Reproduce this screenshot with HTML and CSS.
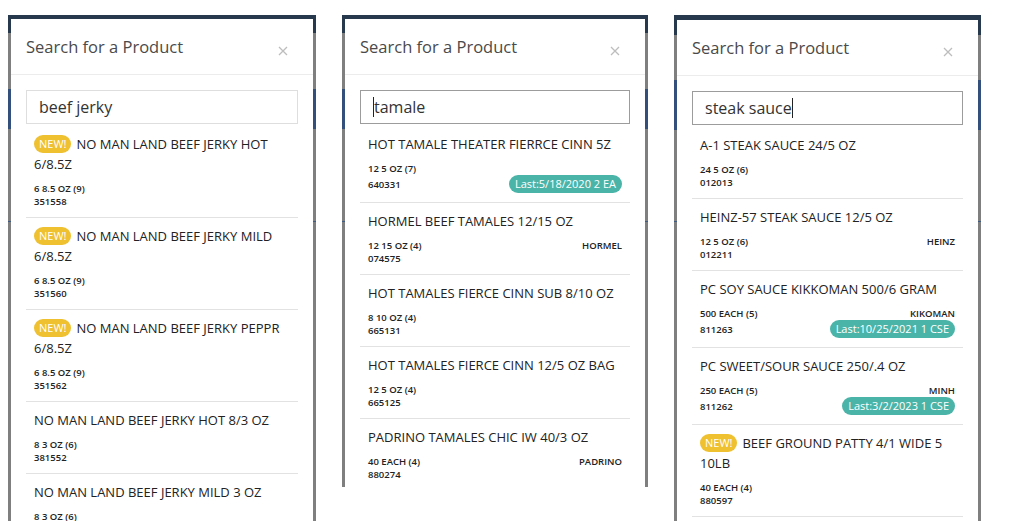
FILE: index.html
```html
<!DOCTYPE html>
<html lang="en">
<head>
<meta charset="utf-8">
<title>Search for a Product</title>
<link rel="stylesheet" href="styles.css">
</head>
<body>
<div class="shots">

  <section class="shot shot--a">
    <div class="modal">
      <header class="modal-head">
        <h2 class="modal-title">Search for a Product</h2>
        <span class="close"><svg width="10" height="10" viewBox="0 0 10 10"><path d="M1 1L9 9M9 1L1 9" stroke="#bdbdbd" stroke-width="1.3" fill="none"/></svg></span>
      </header>
      <div class="modal-body">
        <div class="search">beef jerky</div>
        <ul class="results">
          <li class="item">
            <div class="title"><span class="new">NEW!</span><span class="name">NO MAN LAND BEEF JERKY HOT 6/8.5Z</span></div>
            <div class="meta">
              <div class="row"><span>6 8.5 OZ (9)</span></div>
              <div class="row"><span>351558</span></div>
            </div>
          </li>
          <li class="item">
            <div class="title"><span class="new">NEW!</span><span class="name">NO MAN LAND BEEF JERKY MILD 6/8.5Z</span></div>
            <div class="meta">
              <div class="row"><span>6 8.5 OZ (9)</span></div>
              <div class="row"><span>351560</span></div>
            </div>
          </li>
          <li class="item">
            <div class="title"><span class="new">NEW!</span><span class="name">NO MAN LAND BEEF JERKY PEPPR 6/8.5Z</span></div>
            <div class="meta">
              <div class="row"><span>6 8.5 OZ (9)</span></div>
              <div class="row"><span>351562</span></div>
            </div>
          </li>
          <li class="item">
            <div class="title"><span class="name">NO MAN LAND BEEF JERKY HOT 8/3 OZ</span></div>
            <div class="meta">
              <div class="row"><span>8 3 OZ (6)</span></div>
              <div class="row"><span>381552</span></div>
            </div>
          </li>
          <li class="item">
            <div class="title"><span class="name">NO MAN LAND BEEF JERKY MILD 3 OZ</span></div>
            <div class="meta">
              <div class="row"><span>8 3 OZ (6)</span></div>
            </div>
          </li>
        </ul>
      </div>
    </div>
  </section>

  <section class="shot shot--b">
    <div class="modal">
      <header class="modal-head">
        <h2 class="modal-title">Search for a Product</h2>
        <span class="close"><svg width="10" height="10" viewBox="0 0 10 10"><path d="M1 1L9 9M9 1L1 9" stroke="#bdbdbd" stroke-width="1.3" fill="none"/></svg></span>
      </header>
      <div class="modal-body">
        <div class="search search--focus"><span class="caret"></span>tamale</div>
        <ul class="results">
          <li class="item">
            <div class="title"><span class="name">HOT TAMALE THEATER FIERRCE CINN 5Z</span></div>
            <div class="meta">
              <div class="row"><span>12 5 OZ (7)</span></div>
              <div class="row"><span>640331</span><span class="last">Last:5/18/2020 2 EA</span></div>
            </div>
          </li>
          <li class="item">
            <div class="title"><span class="name">HORMEL BEEF TAMALES 12/15 OZ</span></div>
            <div class="meta">
              <div class="row"><span>12 15 OZ (4)</span><span>HORMEL</span></div>
              <div class="row"><span>074575</span></div>
            </div>
          </li>
          <li class="item">
            <div class="title"><span class="name">HOT TAMALES FIERCE CINN SUB 8/10 OZ</span></div>
            <div class="meta">
              <div class="row"><span>8 10 OZ (4)</span></div>
              <div class="row"><span>665131</span></div>
            </div>
          </li>
          <li class="item">
            <div class="title"><span class="name">HOT TAMALES FIERCE CINN 12/5 OZ BAG</span></div>
            <div class="meta">
              <div class="row"><span>12 5 OZ (4)</span></div>
              <div class="row"><span>665125</span></div>
            </div>
          </li>
          <li class="item">
            <div class="title"><span class="name">PADRINO TAMALES CHIC IW 40/3 OZ</span></div>
            <div class="meta">
              <div class="row"><span>40 EACH (4)</span><span>PADRINO</span></div>
              <div class="row"><span>880274</span></div>
            </div>
          </li>
        </ul>
      </div>
    </div>
  </section>

  <section class="shot shot--c">
    <div class="modal">
      <header class="modal-head">
        <h2 class="modal-title">Search for a Product</h2>
        <span class="close"><svg width="10" height="10" viewBox="0 0 10 10"><path d="M1 1L9 9M9 1L1 9" stroke="#bdbdbd" stroke-width="1.3" fill="none"/></svg></span>
      </header>
      <div class="modal-body">
        <div class="search search--focus">steak sauce<span class="caret"></span></div>
        <ul class="results">
          <li class="item">
            <div class="title"><span class="name">A-1 STEAK SAUCE 24/5 OZ</span></div>
            <div class="meta">
              <div class="row"><span>24 5 OZ (6)</span></div>
              <div class="row"><span>012013</span></div>
            </div>
          </li>
          <li class="item">
            <div class="title"><span class="name">HEINZ-57 STEAK SAUCE 12/5 OZ</span></div>
            <div class="meta">
              <div class="row"><span>12 5 OZ (6)</span><span>HEINZ</span></div>
              <div class="row"><span>012211</span></div>
            </div>
          </li>
          <li class="item">
            <div class="title"><span class="name">PC SOY SAUCE KIKKOMAN 500/6 GRAM</span></div>
            <div class="meta">
              <div class="row"><span>500 EACH (5)</span><span>KIKOMAN</span></div>
              <div class="row"><span>811263</span><span class="last">Last:10/25/2021 1 CSE</span></div>
            </div>
          </li>
          <li class="item">
            <div class="title"><span class="name">PC SWEET/SOUR SAUCE 250/.4 OZ</span></div>
            <div class="meta">
              <div class="row"><span>250 EACH (5)</span><span>MINH</span></div>
              <div class="row"><span>811262</span><span class="last">Last:3/2/2023 1 CSE</span></div>
            </div>
          </li>
          <li class="item">
            <div class="title"><span class="new">NEW!</span><span class="name">BEEF GROUND PATTY 4/1 WIDE 5 10LB</span></div>
            <div class="meta">
              <div class="row"><span>40 EACH (4)</span></div>
              <div class="row"><span>880597</span></div>
            </div>
          </li>
        </ul>
      </div>
    </div>
  </section>

</div>
</body>
</html>
```

FILE: styles.css
```css
* { box-sizing: border-box; }

html, body {
  margin: 0;
  background: #ffffff;
}

body {
  font-family: "Open Sans", "Noto Sans", "DejaVu Sans", sans-serif;
  color: #222;
  height: 521px;
  overflow: hidden;
}

.shots {
  display: flex;
  align-items: flex-start;
  gap: 26px;
  padding: 15px 0 0 8px;
}

.shot {
  flex: none;
  width: 308px;
  height: 506px;
  padding: 4px 3px 0;
  overflow: hidden;
  background: linear-gradient(to bottom,
    #27394c 0 18px,
    #7f7f7f 18px 74px,
    #33507c 74px 114px,
    #7f7f7f 114px 206px,
    #3f5b83 206px 207px,
    #7f7f7f 207px);
}

.shot--b {
  width: 306px;
  height: 472px;
}

.shot--c {
  width: 307px;
  padding-top: 5px;
  background: linear-gradient(to bottom,
    #27394c 0 20px,
    #7f7f7f 20px 65px,
    #33507c 65px 115px,
    #7f7f7f 115px 206px,
    #3f5b83 206px 207px,
    #7f7f7f 207px);
}

.modal {
  background: #fff;
  height: 100%;
  overflow: hidden;
}

.modal-head {
  display: flex;
  align-items: center;
  justify-content: space-between;
  padding: 16px 15px 15px 15px;
  border-bottom: 1px solid #ececec;
}

.modal-title {
  margin: 0;
  font-size: 16.5px;
  line-height: 24px;
  font-weight: 400;
  color: #4a4a4a;
}

.close {
  display: flex;
  width: 10px;
  height: 10px;
  margin: 7px 10px 0 0;
}

.modal-body {
  padding: 15px 15px 0;
}

.search {
  height: 34px;
  border: 1px solid #dedede;
  padding: 0 12px;
  font-size: 16px;
  line-height: 32px;
  color: #333;
  display: flex;
  align-items: center;
}

.search--focus {
  border-color: #9c9c9c;
}

.caret {
  display: inline-block;
  width: 1px;
  height: 20px;
  background: #222;
}

.results {
  list-style: none;
  margin: 2px 0 0;
  padding: 0;
}

.item {
  padding: 8px 8px 9px;
  border-bottom: 1px solid #e2e2e2;
}

.title {
  font-size: 13px;
  line-height: 20px;
  color: #222;
}

.new {
  display: inline-block;
  vertical-align: top;
  margin: 1px 5px 0 0;
  padding: 0 5px;
  height: 18px;
  line-height: 18px;
  font-size: 11px;
  border-radius: 9px;
  background: #efc02f;
  color: #fff;
}

.meta {
  margin-top: 8px;
  font-size: 9.5px;
  line-height: 13px;
  font-weight: 600;
  color: #222;
}

.row {
  display: flex;
  align-items: center;
  justify-content: space-between;
  min-height: 13px;
}

.last {
  height: 18px;
  line-height: 18px;
  padding: 0 6px;
  border-radius: 9px;
  background: #4bb4a9;
  color: #fff;
  font-size: 11px;
  font-weight: 400;
}
```
